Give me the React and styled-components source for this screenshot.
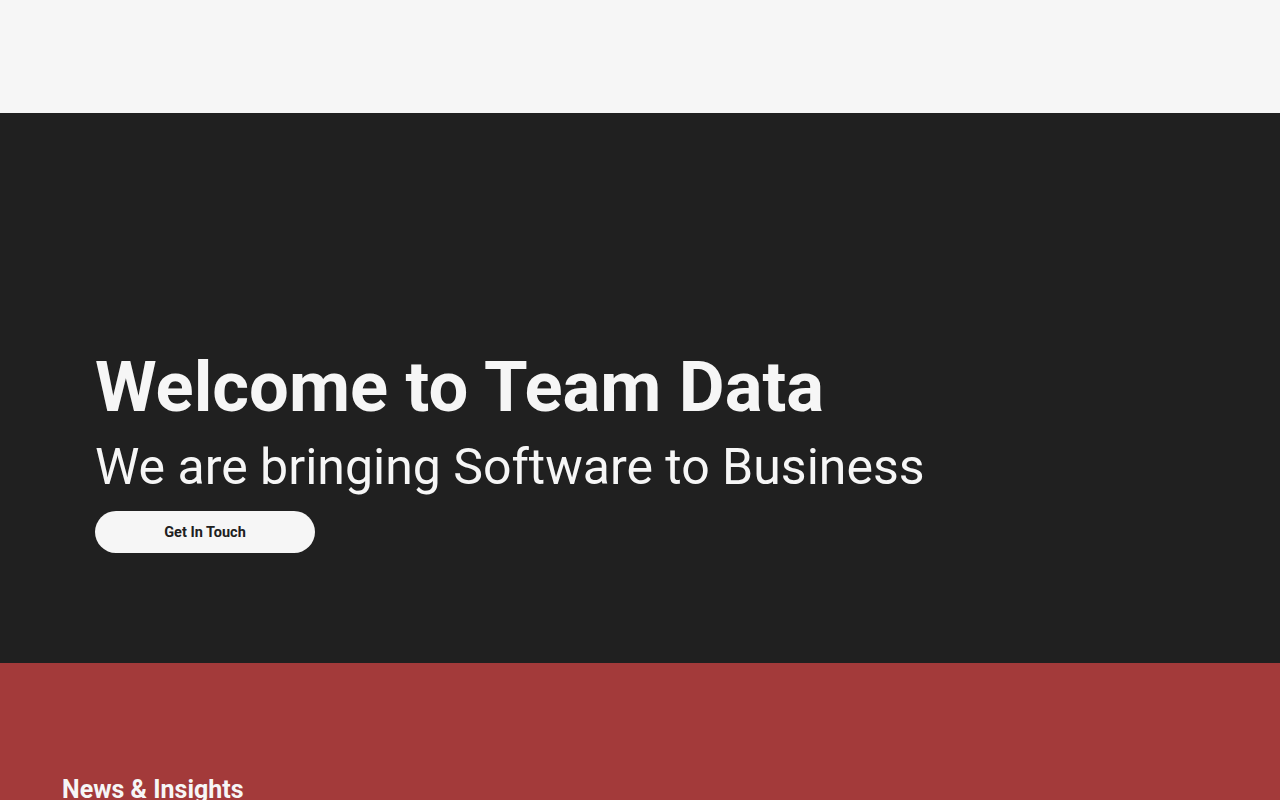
import React from "react";
import styled, { createGlobalStyle } from "styled-components";

const GlobalStyle = createGlobalStyle`
  body {
    margin: 0;
    font-family: Roboto, "Liberation Sans", sans-serif;
    background: #f6f6f6;
  }
`;

const Header = styled.header`
  height: 113px;
  background: #f6f6f6;
`;

const Hero = styled.section`
  height: 550px;
  background: #202020;
  color: #f6f6f6;
  display: flex;
  flex-direction: column;
  justify-content: flex-end;
  padding: 0 95px 110px;
  box-sizing: border-box;
`;

const Title = styled.h1`
  margin: 0;
  font-size: 70.5px;
  font-weight: 700;
  line-height: 1.4;
`;

const Subtitle = styled.h2`
  margin: 0;
  font-size: 50px;
  font-weight: 400;
  line-height: 1.2;
`;

const Button = styled.button`
  margin-top: 14px;
  width: 220px;
  height: 42px;
  border: none;
  border-radius: 21px;
  background: #f6f6f6;
  color: #202020;
  font-family: Roboto, "Liberation Sans", sans-serif;
  font-size: 14.5px;
  font-weight: 700;
  cursor: pointer;
`;

const News = styled.section`
  background: #a33a3a;
  padding: 112px 62px 40px;
  color: #f6f6f6;
`;

const NewsTitle = styled.h3`
  margin: 0;
  font-size: 25px;
  font-weight: 700;
`;

export default function App() {
  return (
    <>
      <GlobalStyle />
      <Header />
      <Hero>
        <Title>Welcome to Team Data</Title>
        <Subtitle>We are bringing Software to Business</Subtitle>
        <div>
          <Button>Get In Touch</Button>
        </div>
      </Hero>
      <News>
        <NewsTitle>News &amp; Insights</NewsTitle>
      </News>
    </>
  );
}
